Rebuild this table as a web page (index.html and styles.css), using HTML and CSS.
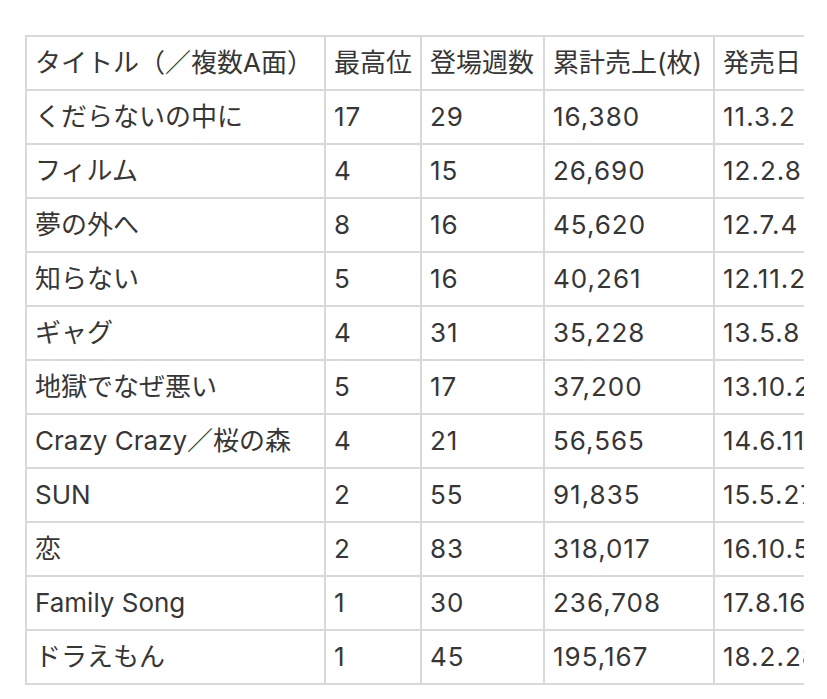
FILE: index.html
```html
<!DOCTYPE html>
<html lang="ja">
<head>
<meta charset="utf-8">
<link rel="stylesheet" href="styles.css">
</head>
<body>
<div class="page">
  <div class="scroller">
    <table class="chart">
      <colgroup>
        <col class="c-title">
        <col class="c-peak">
        <col class="c-weeks">
        <col class="c-sales">
        <col class="c-date">
      </colgroup>
      <thead>
        <tr><th>タイトル（／複数A面）</th><th>最高位</th><th>登場週数</th><th>累計売上(枚)</th><th>発売日</th></tr>
      </thead>
      <tbody>
        <tr><td>くだらないの中に</td><td>17</td><td>29</td><td>16,380</td><td>11.3.2</td></tr>
        <tr><td>フィルム</td><td>4</td><td>15</td><td>26,690</td><td>12.2.8</td></tr>
        <tr><td>夢の外へ</td><td>8</td><td>16</td><td>45,620</td><td>12.7.4</td></tr>
        <tr><td>知らない</td><td>5</td><td>16</td><td>40,261</td><td>12.11.21</td></tr>
        <tr><td>ギャグ</td><td>4</td><td>31</td><td>35,228</td><td>13.5.8</td></tr>
        <tr><td>地獄でなぜ悪い</td><td>5</td><td>17</td><td>37,200</td><td>13.10.23</td></tr>
        <tr><td>Crazy Crazy／桜の森</td><td>4</td><td>21</td><td>56,565</td><td>14.6.11</td></tr>
        <tr><td>SUN</td><td>2</td><td>55</td><td>91,835</td><td>15.5.27</td></tr>
        <tr><td>恋</td><td>2</td><td>83</td><td>318,017</td><td>16.10.5</td></tr>
        <tr><td>Family Song</td><td>1</td><td>30</td><td>236,708</td><td>17.8.16</td></tr>
        <tr><td>ドラえもん</td><td>1</td><td>45</td><td>195,167</td><td>18.2.28</td></tr>
      </tbody>
    </table>
  </div>
</div>
</body>
</html>
```

FILE: styles.css
```css
html, body {
  margin: 0;
  padding: 0;
  background: #ffffff;
}
.page {
  padding: 35px 0 0 25px;
}
.scroller {
  width: 779px;
  overflow: hidden;
}
.chart {
  border-collapse: separate;
  border-spacing: 0;
  table-layout: fixed;
  width: 822px;
  border-top: 2px solid #d9d9d9;
  border-left: 2px solid #d9d9d9;
  font-family: "Inter", "Noto Sans CJK JP", sans-serif;
  font-size: 26px;
  color: #363636;
}
.c-title { width: 299px; }
.c-peak { width: 96px; }
.c-weeks { width: 123px; }
.c-sales { width: 170px; }
.c-date { width: 132px; }
.chart th,
.chart td {
  font-weight: normal;
  text-align: left;
  white-space: nowrap;
  overflow: hidden;
  padding: 0 0 0 8px;
  line-height: 52px;
  border-right: 2px solid #d9d9d9;
  border-bottom: 2px solid #d9d9d9;
}
.chart td + td {
  letter-spacing: 1px;
}
```
